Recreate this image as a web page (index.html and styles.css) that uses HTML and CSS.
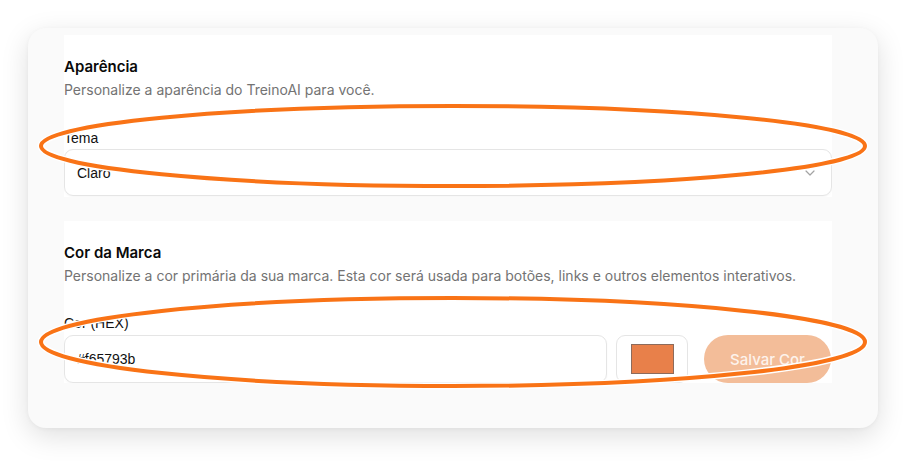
FILE: index.html
```html
<!DOCTYPE html>
<html lang="pt-BR">
<head>
<meta charset="utf-8">
<title>Aparência</title>
<link rel="stylesheet" href="styles.css">
</head>
<body>
<div class="page">
  <div class="card">
    <section class="panel panel-theme">
      <h2 class="title">Aparência</h2>
      <p class="desc">Personalize a aparência do TreinoAI para você.</p>
      <label class="label">Tema</label>
      <div class="select">
        <span class="select-value">Claro</span>
        <svg class="chevron" width="10" height="6" viewBox="0 0 10 6"><path d="M1 1l4 4 4-4" fill="none" stroke="#a3a3a3" stroke-width="1.2" stroke-linecap="round" stroke-linejoin="round"/></svg>
      </div>
    </section>
    <section class="panel panel-color">
      <h2 class="title">Cor da Marca</h2>
      <p class="desc">Personalize a cor primária da sua marca. Esta cor será usada para botões, links e outros elementos interativos.</p>
      <label class="label">Cor (HEX)</label>
      <div class="row">
        <div class="input"><span class="input-value">#f65793b</span></div>
        <div class="swatch-box"><span class="swatch"></span></div>
        <button class="btn">Salvar Cor</button>
      </div>
    </section>
  </div>
  <svg class="annot" width="906" height="464" viewBox="0 0 906 464">
    <ellipse cx="453" cy="146" rx="412" ry="40" fill="none" stroke="#ffffff" stroke-width="7"/>
    <ellipse cx="453" cy="146" rx="412" ry="40" fill="none" stroke="#f97316" stroke-width="4"/>
    <ellipse cx="453" cy="342" rx="412" ry="44" fill="none" stroke="#ffffff" stroke-width="7"/>
    <ellipse cx="453" cy="342" rx="412" ry="44" fill="none" stroke="#f97316" stroke-width="4"/>
  </svg>
</div>
</body>
</html>
```
FILE: styles.css
```css
html, body {
  margin: 0;
  padding: 0;
  background: #ffffff;
}
.page {
  position: relative;
  width: 906px;
  height: 464px;
  padding: 28px 0 0 28px;
  box-sizing: border-box;
  font-family: Inter, "Noto Sans", sans-serif;
}
.card {
  width: 850px;
  height: 400px;
  box-sizing: border-box;
  background: #fafafa;
  border-radius: 18px;
  box-shadow: 0 8px 28px rgba(0, 0, 0, 0.13), 0 1px 4px rgba(0, 0, 0, 0.04);
  padding: 7px 0 0 36px;
  display: flex;
  flex-direction: column;
  gap: 24px;
}
.panel {
  width: 768px;
  height: 162px;
  background: #ffffff;
  box-sizing: border-box;
  padding-top: 22px;
  display: flex;
  flex-direction: column;
  overflow: hidden;
}
.title {
  margin: 0;
  font-size: 15px;
  line-height: 20px;
  font-weight: 600;
  color: #0a0a0a;
}
.desc {
  margin: 3px 0 0 0;
  font-size: 14px;
  line-height: 20px;
  color: #737373;
}
.label {
  display: block;
  font-family: "Liberation Sans", Arial, sans-serif;
  font-size: 14px;
  line-height: 20px;
  color: #111111;
}
.panel-theme .label {
  margin-top: 28px;
  margin-bottom: 1px;
}
.panel-color .label {
  margin-top: 27px;
  margin-bottom: 2px;
}
.select {
  height: 47px;
  box-sizing: border-box;
  border: 1px solid #e5e5e5;
  border-radius: 9px;
  display: flex;
  align-items: center;
  justify-content: space-between;
  padding: 0 16px 0 12px;
  box-shadow: 0 1px 2px rgba(0, 0, 0, 0.04);
}
.select-value, .input-value {
  font-family: "Liberation Sans", Arial, sans-serif;
  font-size: 14px;
  color: #111111;
}
.chevron {
  display: block;
}
.row {
  display: flex;
  align-items: stretch;
  height: 48px;
}
.input {
  width: 543px;
  box-sizing: border-box;
  border: 1px solid #e5e5e5;
  border-radius: 9px;
  display: flex;
  align-items: center;
  padding: 0 12px;
  box-shadow: 0 1px 2px rgba(0, 0, 0, 0.04);
}
.swatch-box {
  width: 72px;
  margin-left: 9px;
  box-sizing: border-box;
  border: 1px solid #e5e5e5;
  border-radius: 9px;
  display: flex;
  justify-content: center;
  padding-top: 8px;
}
.swatch {
  width: 43px;
  height: 30px;
  box-sizing: border-box;
  background: #e8804a;
  border: 1px solid #8d6b5b;
}
.btn {
  margin-left: 16px;
  width: 127px;
  border: none;
  border-radius: 24px;
  background: #f3bd99;
  color: #fdf3ec;
  font-family: Inter, "Noto Sans", sans-serif;
  font-size: 15px;
  font-weight: 500;
  padding: 0;
}
.annot {
  position: absolute;
  top: 0;
  left: 0;
  pointer-events: none;
}
```
